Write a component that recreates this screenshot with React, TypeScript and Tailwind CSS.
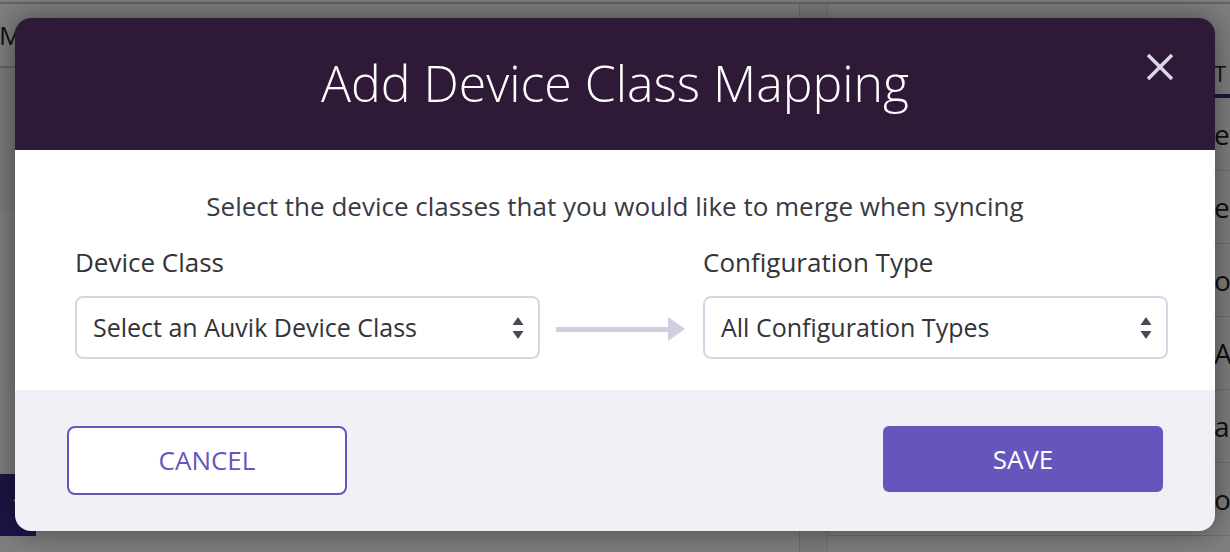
import React from "react";

const font = { fontFamily: '"Open Sans", "Liberation Sans", sans-serif' };

function SortArrows() {
  return (
    <svg width="12" height="26" viewBox="0 0 12 26" className="text-[#4a4a55]">
      <path d="M6 2 L11.5 10 L0.5 10 Z" fill="currentColor" />
      <path d="M6 24 L11.5 16 L0.5 16 Z" fill="currentColor" />
    </svg>
  );
}

function SelectBox({ value }: { value: string }) {
  return (
    <div className="flex h-[63px] w-[465px] items-center justify-between rounded-[8px] border-2 border-[#d8d6e6] bg-white pl-[16px] pr-[14px]">
      <span className="text-[25px] leading-none text-[#333338]">{value}</span>
      <SortArrows />
    </div>
  );
}

function Background() {
  const rows = ["ev", "ev", "os", "A", "a", "o"];
  return (
    <div className="flex h-[552px] w-[1230px] flex-col bg-white">
      <div className="h-[4px] border-b-2 border-[#c8c8c8]" />
      <div className="flex flex-1">
        <div className="flex w-[800px] shrink-0 flex-col border-r border-[#dddddd]">
          <div className="flex h-[64px] items-center border-b-2 border-[#cfcfcf] text-[26px] text-[#222]">
            <span className="-ml-[1px]">Mappings</span>
          </div>
          <div className="h-[142px] bg-[#f6f6f6]" />
          <div className="flex-1" />
          <div className="flex h-[62px] items-center">
            <div className="flex h-[62px] w-[36px] items-center justify-center bg-[#3b2a8c] text-[24px] text-white">
              1
            </div>
          </div>
          <div className="h-[16px]" />
        </div>
        <div className="w-[28px] shrink-0 border-r border-[#dddddd] bg-[#f6f6f6]" />
        <div className="flex min-w-0 flex-1 flex-col overflow-hidden">
          <div className="flex h-[94px] items-end">
            <div className="w-full border-b-4 border-[#3b2a8c] pb-1 pl-[386px] text-[22px] text-[#222]">
              T
            </div>
          </div>
          {rows.map((r, i) => (
            <div
              key={i}
              className="flex h-[73px] items-center border-b border-[#dddddd] pl-[386px] text-[28px] text-[#222]"
            >
              {r}
            </div>
          ))}
        </div>
      </div>
    </div>
  );
}

export default function App() {
  return (
    <div className="relative h-[552px] w-[1230px] overflow-hidden" style={font}>
      <Background />
      <div className="absolute inset-0 bg-black/50" />
      <div className="absolute left-[15px] top-[18px] flex h-[513px] w-[1200px] flex-col overflow-hidden rounded-[16px] shadow-[0_0_30px_rgba(0,0,0,0.45)]">
        <div className="relative flex h-[132px] items-center justify-center bg-[#2e1a36] pb-[3px]">
          <h1 className="text-[50px] font-light leading-none text-white">
            Add Device Class Mapping
          </h1>
          <button className="absolute right-[40px] top-[34px] text-[#dcd6e6]">
            <svg width="30" height="30" viewBox="0 0 30 30">
              <path d="M3 3 L27 27 M27 3 L3 27" stroke="currentColor" strokeWidth="3.5" />
            </svg>
          </button>
        </div>
        <div className="flex h-[240px] flex-col bg-white pt-[40px]">
          <p className="text-center text-[26px] leading-[32px] text-[#3a3a42]">
            Select the device classes that you would like to merge when syncing
          </p>
          <div className="mt-[24px] flex items-end pl-[60px]">
            <div className="flex flex-col">
              <label className="mb-[18px] text-[26px] leading-[32px] text-[#333338]">
                Device Class
              </label>
              <SelectBox value="Select an Auvik Device Class" />
            </div>
            <div className="mx-[16px] mb-[18px] flex items-center">
              <div className="h-[5px] w-[112px] bg-[#d0cee0]" />
              <svg width="17" height="24" viewBox="0 0 17 24">
                <path d="M0 0 L17 12 L0 24 Z" fill="#d0cee0" />
              </svg>
            </div>
            <div className="ml-[2px] flex flex-col">
              <label className="mb-[18px] text-[26px] leading-[32px] text-[#333338]">
                Configuration Type
              </label>
              <SelectBox value="All Configuration Types" />
            </div>
          </div>
        </div>
        <div className="flex flex-1 items-start justify-between bg-[#f0f1f7] px-[52px] pt-[36px]">
          <button className="flex h-[69px] w-[280px] items-center justify-center rounded-[8px] border-2 border-[#6456bd] bg-white text-[26px] text-[#6456bd]">
            CANCEL
          </button>
          <button className="flex h-[66px] w-[280px] items-center justify-center rounded-[6px] bg-[#6556bc] text-[26px] text-white">
            SAVE
          </button>
        </div>
      </div>
    </div>
  );
}
